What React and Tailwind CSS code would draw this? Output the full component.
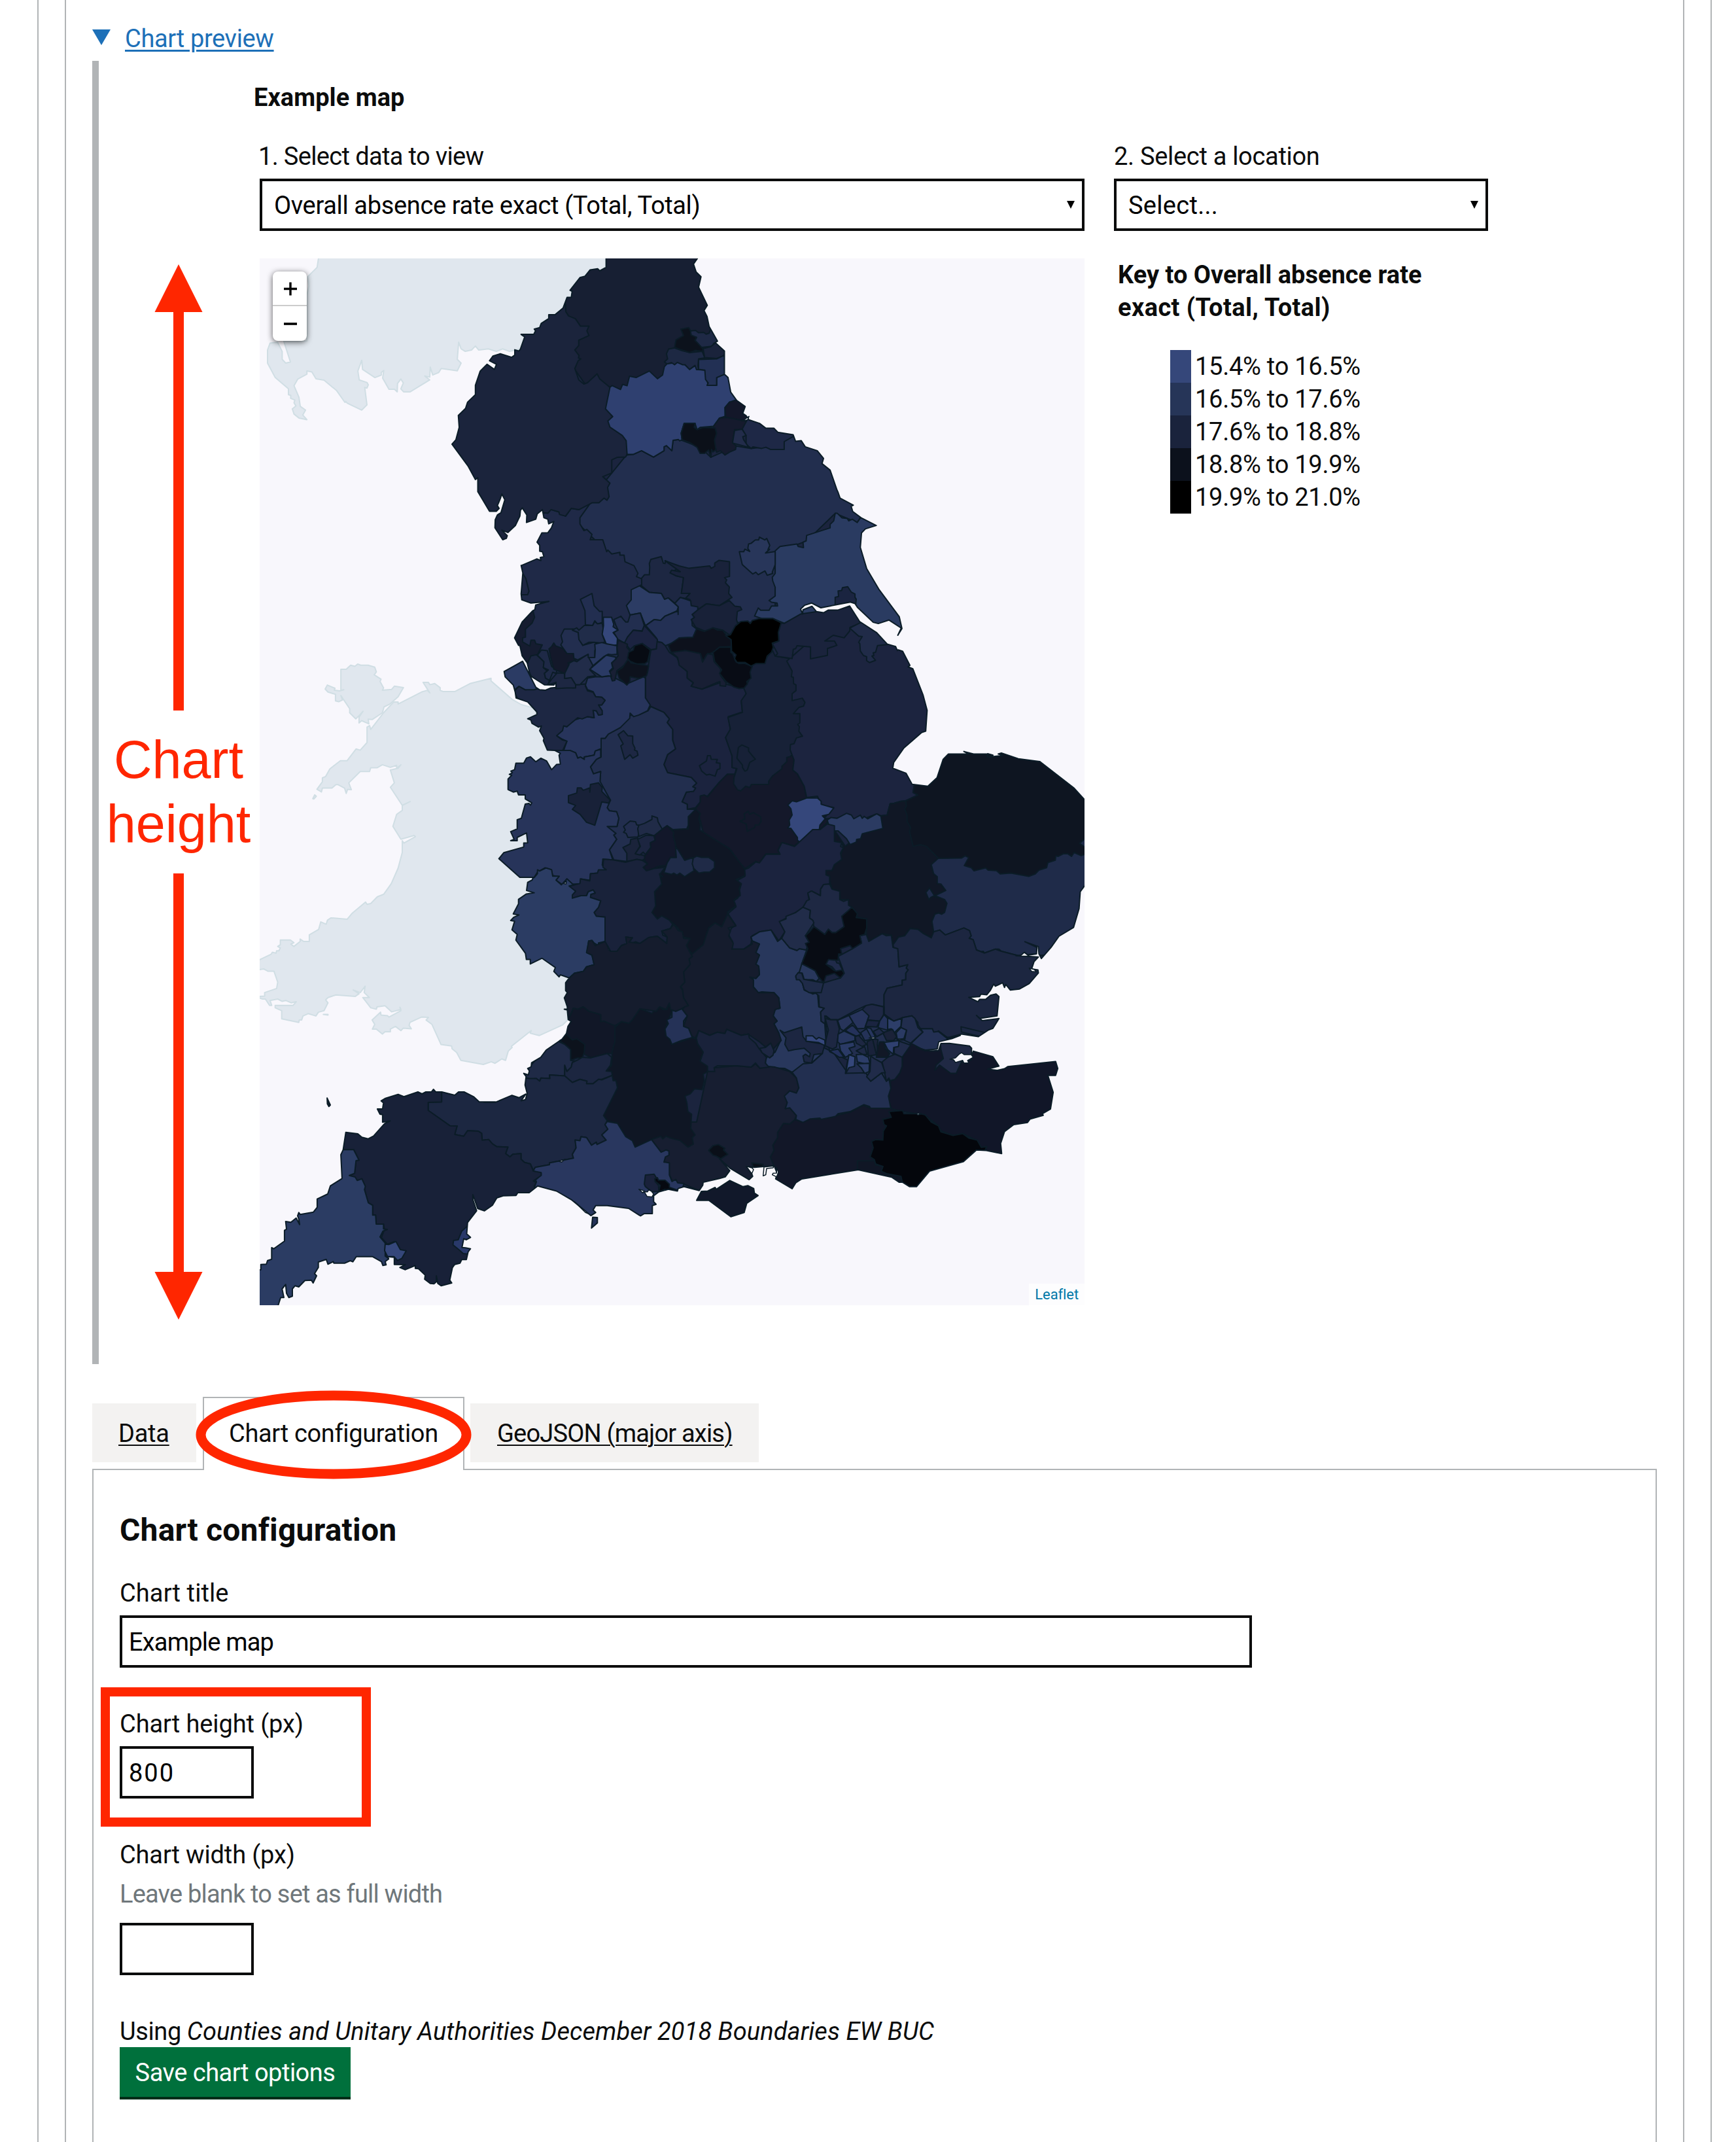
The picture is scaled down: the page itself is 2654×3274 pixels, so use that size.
import React from 'react';

// Survey sheets: origin (x, y) and units per pixel on each axis.
const SHEETS = {
  A: [380, 380, 2.3758, 2.8],
  B: [680, 380, 2.1778, 2.8],
  C: [680, 840, 3, 2.8],
  D: [1100, 800, 2.7034, 2.6133],
  E: [380, 960, 2.8, 2.24],
  F: [740, 1280, 3, 2.529],
  G: [1100, 1280, 2.7034, 2.529],
  H: [380, 1600, 2.24, 3],
};

// "B: x,y x,y C: x,y" -> svg points in page pixels
function points(src) {
  let sheet = SHEETS.A;
  return src
    .trim()
    .split(/\s+/)
    .map((tok) => {
      if (tok.endsWith(':')) {
        sheet = SHEETS[tok[0]];
        return '';
      }
      const [x, y] = tok.split(',').map(Number);
      const [ox, oy, sx, sy] = sheet;
      return `${(ox + x / sx).toFixed(1)},${(oy + y / sy).toFixed(1)}`;
    })
    .filter(Boolean)
    .join(' ');
}

const NEIGHBOURS = [
  // Scotland
  'A: 254,20 254,42 249,80 215,120 219,160 212,200 212,395 128,397 152,485 135,490 122,474 122,440 105,400 78,405 69,434 69,490 97,552 145,600 145,625 153,628 153,641 168,648 165,660 172,673 159,686 165,708 183,725 212,732 197,712 207,691 188,675 183,636 165,587 179,558 212,537 212,524 230,528 245,557 274,563 320,608 350,658 353,654 359,662 411,691 430,669 422,594 430,597 435,583 430,573 402,562 397,524 411,478 414,517 459,552 482,541 482,530 491,522 487,554 510,602 530,602 540,613 541,577 553,558 562,575 553,600 563,613 587,613 658,562 640,545 658,550 660,507 669,541 691,530 700,513 758,523 772,490 758,474 763,400 772,429 787,440 810,434 824,417 836,434 871,429 900,440 923,429 948,440 1000,425 1150,300 1320,90 1320,20',
  // Wales
  'E: 1168,262 1130,245 1038,181 1038,172 948,190 884,217 832,217 820,213 820,204 797,190 776,194 770,186 747,186 776,222 765,213 740,219 640,260 640,253 622,253 578,290 523,347 518,334 507,339 507,392 478,418 460,414 422,454 393,454 374,466 348,482 330,508 316,513 316,526 293,552 312,561 316,548 357,548 374,536 383,536 411,548 418,566 424,552 440,553 429,530 478,491 518,491 523,478 551,478 573,468 607,477 634,470 634,480 652,468 640,480 607,486 624,530 607,545 658,607 692,594 658,607 658,624 634,638 618,679 652,723 709,710 714,714 665,736 658,728 658,768 640,822 611,875 579,911 551,920 523,943 507,946 501,938 444,976 422,997 353,992 338,1000 332,1014 309,1006 300,1032 260,1050 260,1073 236,1073 221,1065 221,1073 194,1090 181,1082 194,1077 179,1068 136,1068 136,1084 125,1090 136,1095 130,1105 120,1105 118,1113 102,1110 96,1117 30,1142 30,1172 65,1167 84,1175 109,1175 125,1212 120,1234 69,1248 69,1260 30,1262 60,1270 72,1270 90,1292 99,1292 92,1275 125,1270 144,1278 159,1275 183,1283 204,1279 190,1292 114,1292 114,1300 142,1310 142,1338 215,1350 217,1342 227,1342 233,1328 255,1320 288,1328 299,1315 323,1310 340,1283 330,1273 340,1265 374,1256 457,1261 473,1252 448,1239 478,1248 499,1226 495,1248 517,1265 489,1265 523,1300 547,1305 550,1297 584,1293 612,1314 652,1306 648,1298 652,1310 601,1332 595,1327 567,1325 565,1315 545,1330 529,1342 540,1357 530,1373 547,1373 573,1390 584,1382 607,1382 607,1373 629,1364 652,1378 662,1370 697,1372 687,1360 691,1350 740,1332 770,1333 760,1342 785,1357 824,1426 869,1431 871,1440 891,1453 909,1480 1005,1494 1039,1485 1055,1490 1084,1475 1100,1480 1112,1448 1128,1436 1125,1432 1210,1378 1206,1387 1244,1395 1344,1359 1368,1340 1400,1200 1340,500 1340,380 1250,280',
  // Anglesey, Holy Island, Bardsey, Caldey
  'E: 395,141 418,141 437,127 455,131 467,123 480,127 512,127 540,134 547,150 538,160 567,175 563,183 578,205 573,213 612,210 624,199 663,204 640,235 605,260 580,270 573,290 530,313 512,312 515,328 484,317 473,325 473,305 490,285 473,300 459,311 433,290 433,276 395,231 402,246 386,252 372,249 372,227 340,219 328,209 337,195 370,206 367,213 390,215 408,211 395,213',
  'E: 275,584 283,571 290,576 280,585',
  'E: 320,1323 340,1323 340,1325',
];

const ENGLAND =
  'B: 537,20 537,80 516,95 509,86 484,91 467,118 450,124 417,178 424,183 421,209 407,209 394,254 367,283 346,283 346,299 321,320 316,338 298,344 302,352 296,367 254,367 266,378 251,432 246,438 233,433 233,455 223,465 185,450 160,460 149,480 172,495 165,517 141,495 118,524 102,585 102,625 76,657 69,684 45,714 48,765 37,818 24,837 77,930 102,988 110,980 110,1040 149,1124 172,1124 181,1112 175,1100 185,1070 190,1050 200,1075 187,1130 175,1140 168,1160 167,1195 193,1246 205,1240 208,1228 190,1205 210,1215 235,1185 250,1145 252,1120 258,1110 273,1140 272,1172 303,1158 308,1135 325,1117 330,1152 343,1158 346,1178 363,1168 355,1195 343,1216 323,1217 307,1256 316,1270 316,1295 325,1297 330,1318 318,1322 320,1335 306,1328 255,1356 ' +
  'C: 350,68 358,100 350,190 353,215 395,229 478,222 417,237 413,257 403,262 355,310 320,378 338,410 344,410 355,455 378,485 392,540 458,579 500,580 510,568 510,590 487,592 462,602 435,600 418,590 357,478 272,522 277,545 314,580 323,610 327,635 380,652 422,695 422,706 380,724 395,730 400,744 430,760 443,755 435,775 455,808 452,818 470,858 505,860 530,872 524,880 530,918 512,920 490,942 467,905 441,893 417,908 393,887 375,892 362,914 326,914 320,942 303,948 310,955 296,962 307,966 290,982 290,1027 314,1038 332,1034 338,1050 369,1050 369,1067 399,1084 393,1094 386,1086 369,1089 351,1150 332,1156 332,1195 302,1207 318,1240 302,1246 332,1246 332,1232 375,1213 380,1255 362,1256 362,1273 271,1297 248,1323 344,1403 405,1403 401,1414 380,1424 375,1459 410,1469 374,1474 338,1497 338,1516 314,1559 ' +
  'F: 134,296 160,300 137,308 122,321 140,324 128,357 152,375 146,397 190,448 194,472 212,472 212,489 266,467 327,503 320,518 344,539 350,531 391,543 374,562 374,592 382,600 368,620 382,655 382,664 368,664 382,667 386,704 400,711 385,730 378,758 358,780 345,787 285,822 260,850 218,871 216,887 200,893 208,902 203,918 182,912 193,924 188,957 198,990 190,1013 170,1018 192,992 160,1006 128,997 52,1024 0,1024 ' +
  'H: 845,253 790,253 772,230 738,207 719,207 706,222 662,207 641,207 633,195 626,207 607,207 594,216 580,207 532,229 512,218 469,236 454,248 462,257 459,285 441,285 450,309 459,311 459,346 485,340 466,352 428,409 410,422 388,415 374,399 333,392 324,472 316,495 320,604 280,638 271,675 235,698 235,736 222,758 177,769 172,760 168,775 172,790 175,815 163,785 145,805 127,801 130,836 123,842 123,891 86,926 79,921 79,974 65,980 61,997 42,998 42,1022 20,1026 20,1195 101,1187 110,1150 121,1150 115,1110 127,1090 130,1130 138,1150 150,1144 150,1110 159,1096 172,1101 193,1072 215,1070 221,1083 233,1050 226,1040 239,1012 239,987 266,975 272,997 290,985 292,992 330,992 348,981 357,986 369,962 424,962 455,985 460,1003 471,1000 468,985 480,973 476,962 499,965 499,998 537,999 518,1012 537,1022 571,1003 571,1016 582,1018 605,1047 603,1066 622,1085 635,1087 643,1078 643,1050 648,1085 660,1096 696,1083 689,1070 698,1013 706,998 724,992 730,976 746,976 752,940 760,926 743,922 731,920 737,880 746,885 760,874 747,858 750,806 781,752 768,700 768,678 785,742 808,752 835,727 850,693 872,683 916,682 922,669 961,669 990,638 ' +
  'F: 332,1367 400,1400 490,1462 512,1450 500,1440 512,1423 565,1423 663,1434 712,1460 718,1463 735,1454 772,1454 772,1423 789,1418 778,1408 778,1385 802,1370 845,1360 887,1367 890,1357 917,1350 987,1365 1003,1345 1005,1333 1080,1318 1106,1312 1127,1288 1080,1242 1127,1278 1216,1323 1232,1310 1228,1300 1203,1272 1240,1275 1285,1272 1330,1268 1345,1300 ' +
  'G: 232,1320 300,1358 315,1335 340,1320 573,1285 711,1313 743,1333 757,1333 786,1350 814,1350 868,1290 1008,1253 1062,1208 1103,1210 1166,1222 1162,1183 1178,1137 1216,1110 1273,1102 1283,1089 1338,1074 1334,1068 1368,1050 1379,985 1357,920 1389,920 1398,893 1389,866 1191,886 1178,894 1148,900 1108,896 1155,884 1130,848 1049,826 1040,845 1042,815 1033,806 950,796 915,797 905,824 870,826 835,820 815,812 850,822 900,818 906,790 960,778 995,765 940,775 1000,760 1070,770 1110,745 1130,738 1155,700 1086,708 1062,688 1075,700 1147,690 1155,615 1143,605 1120,610 1100,626 1075,626 1068,635 1030,618 1075,615 1080,606 1105,608 1120,590 1133,567 1140,575 1170,562 1178,580 1183,568 1202,590 1240,586 1280,565 1318,524 1316,512 1290,508 1300,480 1318,462 1225,457 1245,456 1260,444 1275,455 1310,450 1312,425 1262,403 1318,422 1320,450 1330,468 1370,425 1403,382 1463,348 1486,275 1491,210 1509,187 1540,160 ' +
  'D: 1540,1130 1509,1104 1466,1058 1323,951 1235,940 1165,917 1152,921 1170,927 1115,933 1130,926 1108,920 1108,933 1105,921 1050,921 1010,911 1030,921 946,921 924,943 899,1016 861,1050 796,1042 771,998 716,978 720,955 762,897 836,835 852,830 858,747 841,685 799,581 779,573 787,567 757,511 738,505 735,508 728,492 693,482 650,437 579,392 538,330 490,346 450,346 430,357 400,352 382,331 345,345 343,362 335,342 352,327 380,318 419,337 541,314 560,320 570,335 635,395 656,400 700,386 751,418 737,447 754,420 743,373 660,265 608,180 582,96 587,38 603,22 648,8 ' +
  'B: 1435,1184 1386,1152 1358,1125 1353,1103 1360,1098 1316,1068 1310,1045 1305,1030 1283,948 1256,920 1261,898 1240,865 1200,848 1187,822 1168,825 1160,797 1109,786 1096,769 1069,769 1048,748 1013,733 1003,715 992,705 1000,676 972,650 952,614 943,552 931,538 931,438 900,402 908,396 880,333 873,290 863,265 874,243 845,165 853,120 837,100 828,66 841,42 837,20';

const ISLES = [
  ['#11182a', 'F: 975,1403 997,1368 1026,1367 1060,1353 1065,1360 1127,1326 1188,1350 1210,1346 1237,1357 1240,1375 1257,1384 1205,1414 1193,1450 1132,1466 1031,1403'],
  ['#10202b', 'H: 269,235 280,267 275,274 270,262'],
  ['#26345a', 'F: 498,1468 520,1469 520,1490 493,1510'],
];

// [fill, outline], painted in order and clipped to the coast
const AREAS = [
  ['#171f33', 'B: 360,0 950,0 950,640 500,640 380,420'],
  ['#222e4e', 'B: 605,883 627,881 655,865 695,892 730,865 730,848 738,843 756,865 760,820 782,817 850,850 886,893 970,845 1020,855 1055,850 1130,826 1160,770 1500,900 1480,1190 1384,1152 1373,1172 1300,1133 1204,1252 1100,1300 1100,1600 850,1600 640,1420 430,1160'],
  ['#1f2947', 'B: 200,1110 330,1133 354,1117 380,1127 402,1145 421,1112 447,1117 490,1080 450,1152 450,1178 463,1207 473,1202 490,1223 484,1246 526,1246 539,1297 543,1290 556,1307 583,1300 583,1312 597,1312 600,1340 630,1357 643,1390 638,1404 655,1413 C: 903,150 895,155 860,300 820,600 300,640 200,400 250,0'],
  ['#1b243c', 'B: 0,220 394,220 402,240 403,270 412,288 435,300 452,332 480,332 473,352 480,372 446,392 446,415 433,434 447,458 445,468 453,472 444,480 433,513 446,562 463,580 475,574 507,536 516,558 550,594 640,760 607,881 602,892 575,893 556,904 556,960 526,976 550,1004 542,1022 547,1062 540,1077 530,1068 513,1088 490,1088 447,1117 421,1112 402,1145 382,1138 380,1127 354,1117 343,1133 325,1130 240,1260 0,1260'],
  ['#2f4070', 'B: 550,594 557,586 585,603 592,581 607,587 615,546 637,552 681,524 708,557 725,541 731,505 740,493 774,487 800,497 815,517 833,500 845,518 866,520 870,545 877,585 905,585 905,552 931,538 960,540 1010,660 948,657 933,680 933,718 915,725 895,760 850,765 840,775 833,748 797,748 787,790 790,818 782,823 778,817 760,820 756,865 738,843 730,848 730,865 695,892 655,865 627,881 607,881 604,822 591,800 550,764 543,738 559,719 535,686'],
  ['#1d2843', 'B: 745,430 765,425 790,437 815,445 857,440 866,468 845,472 843,500 845,518 838,518 833,500 815,517 800,497 792,497 774,487 765,497 755,488 740,493 731,485 742,472 738,450'],
  ['#1e2945', 'B: 818,352 835,350 845,360 862,358 870,366 880,362 885,345 900,340 915,396 896,405 890,418 855,423 833,395 838,380 820,372'],
  ['#1a233b', 'B: 860,428 885,420 903,402 945,438 926,460 905,470 865,466'],
  ['#0c121c', 'B: 786,345 812,338 818,352 820,370 838,380 833,392 860,430 858,440 835,435 815,445 797,437 780,430 765,422 770,390 795,372'],
  ['#223054', 'B: 845,475 905,472 928,458 945,480 945,530 905,552 905,585 873,585 877,575 868,560 866,520 845,517'],
  ['#131729', 'B: 948,657 975,645 1010,675 992,705 1015,720 1000,742 960,738 935,720 933,680'],
  ['#151a2d', 'B: 895,760 915,725 940,722 1008,740 1000,775 965,775 958,830 970,845 968,860 950,870 933,883 918,865 905,872 895,830'],
  ['#0b1019', 'B: 797,748 833,748 830,765 840,775 860,765 900,768 905,790 898,820 903,860 893,870 888,860 886,893 878,862 865,876 850,876 840,850 815,830 790,818 787,790'],
  ['#1e2846', 'B: 990,773 1010,725 1160,785 1170,797 1130,826 1130,860 1085,860 1069,850 1055,855 1026,848 1020,855 1003,838 1003,800'],
  ['#222c4a', 'B: 965,778 990,773 1003,800 992,805 995,818 1012,850 958,832'],

  ['#1e2743', 'C: 340,102 358,102 372,125 386,178 380,193 340,193'],
  ['#1d2742', 'C: 903,122 916,108 938,108 940,75 938,60 945,42 993,30 1002,58 1010,60 1012,48 1080,78 1040,95 1060,112 1095,120 1085,188 1125,188 1105,210 1080,205 1055,230 1025,207 1008,213 993,188 938,183 903,155'],
  ['#19223a', 'C: 1010,48 1075,70 1120,80 1195,72 1215,70 1222,80 1238,72 1238,58 1258,46 1306,52 1306,115 1283,120 1293,130 1287,142 1305,160 1302,188 1317,205 1260,240 1200,232 1165,255 1130,240 1125,215 1105,208 1125,188 1085,188 1095,120 1060,112 1033,100 1040,88 1080,95'],
  ['#2c3c64', 'C: 893,155 938,183 993,188 1008,213 1025,207 1071,245 1065,262 1010,285 990,303 960,300 920,326 897,272 850,280 833,240 855,215 855,172'],
  ['#233054', 'C: 1055,230 1080,205 1105,212 1128,220 1130,240 1160,245 1160,260 1135,278 1145,290 1133,300 1135,325 1155,340 1138,376 1075,378 1070,390 1010,412 995,398 978,395 970,378 922,325 960,300 990,303 1010,285 1070,262 1070,278 1071,245'],
  ['#182138', 'C: 1165,255 1200,232 1260,240 1305,218 1330,242 1355,245 1362,257 1342,265 1338,300 1345,320 1325,350 1305,365 1275,345 1230,335 1215,345 1195,350 1150,332 1130,300 1145,290 1135,278'],
  ['#0d111c', 'C: 1155,340 1190,350 1230,335 1250,345 1275,345 1290,365 1312,380 1315,415 1260,418 1230,440 1200,450 1185,480 1172,445 1100,432 1065,440 1040,444 1025,410 1075,378 1138,376'],

  ['#1b233e', 'C: 970,395 995,398 1010,410 1030,440 1065,462 1080,495 1112,522 1112,550 1140,570 1130,585 1180,597 1262,570 1350,590 1380,595 1382,620 1360,650 1365,695 1300,715 1310,770 1288,805 1318,880 1318,932 1338,935 1330,962 1295,962 1260,995 1205,1055 1172,1055 1172,1080 1150,1105 1112,1112 1112,1090 1088,1080 1108,1038 1140,1035 1150,1020 1137,1015 1155,1000 1130,975 1022,955 1005,920 1022,877 1058,853 1045,815 1045,770 1020,740 1030,725 1005,697 945,672 920,635 920,545 910,545 935,490 945,430 970,425'],
  ['#1b233e', 'C: 1168,925 1200,905 1205,882 1218,882 1222,897 1250,898 1245,912 1262,915 1262,938 1250,942 1240,970 1215,962 1200,965 1178,948'],
  ['#181f34', 'C: 1040,440 1105,432 1172,445 1182,482 1205,445 1230,450 1235,480 1265,510 1265,540 1290,570 1288,585 1262,582 1262,565 1245,570 1180,597 1130,585 1140,570 1112,550 1112,522 1075,495 1068,462'],
  ['#14182a', 'C: 1150,1110 1172,1080 1172,1055 1190,1050 1205,1058 1260,995 1295,962 1335,962 D: 280,930 308,925 308,945 303,985 322,1000 350,1050 360,1095 480,1135 440,1200 415,1225 385,1225 310,1288 258,1275 242,1305 252,1320 192,1320 165,1357 150,1350 100,1382 C: 1375,1365 1345,1330 1305,1280 1250,1250 1185,1210 1172,1160'],
  ['#14182a', 'D: 85,1190 105,1180 102,1160 118,1150 125,1162 140,1155 170,1172 172,1190 162,1205 148,1205 145,1215 115,1230 110,1200'],
  ['#172137', 'D: 130,550 188,545 218,505 230,530 290,540 360,540 360,900 308,920 290,932 278,935 278,952 258,970 258,980 220,1008 203,1030 203,1042 132,1043 125,1055 108,1050 88,1068 75,1065 58,1040 60,1015 72,980 52,975 52,930 25,855 45,822 35,775 95,755 90,708 110,680 100,658 120,630'],
  ['#172137', 'D: 78,895 92,885 120,897 120,910 148,942 125,955 115,985 105,990 95,975 95,965 72,938'],
  ['#1c243f', 'D: 290,540 278,550 300,590 297,612 305,615 306,640 316,645 316,668 300,680 300,708 342,698 353,715 347,730 328,735 305,760 332,760 332,797 323,803 330,812 328,830 343,850 318,857 308,880 293,883 292,905 308,945 303,985 322,1000 350,1050 360,1095 405,1090 420,1125 472,1135 430,1180 485,1178 570,1190 650,1160 667,1168 693,1165 705,1120 722,1118 750,1110 770,1108 820,1085 800,1075 805,1045 900,1040 900,500 700,440 540,330'],
  ['#080c15', 'C: 1230,440 1260,418 1312,418 1312,440 1320,445 1335,480 1350,488 1375,487 1410,500 1400,525 1405,550 1385,565 1388,575 1372,593 1350,595 1325,588 1290,565 1260,530 1270,515 1238,480'],
  ['#1a233c', 'D: 250,397 268,399 335,362 345,335 382,320 430,330 540,320 590,395 540,415 538,430 515,457 470,447 435,470 475,470 485,487 446,500 446,527 376,541 376,493 320,489 315,500 305,503 300,540 230,530 240,520 218,480 245,470 243,430'],
  ['#202b48', 'D: 538,418 579,398 600,390 710,482 653,488 645,515 635,517 638,528 630,530 645,547 620,556 608,548 608,532 595,528 582,510 580,480 575,475 590,452 575,450'],
  ['#2a3b61', 'D: 230,110 250,92 320,82 325,92 347,97 345,75 358,70 360,48 457,18 B: 1283,1195 1283,1180 1295,1165 1300,1133 1307,1133 1322,1152 1340,1155 1345,1165 1357,1158 1373,1172 1384,1152 1480,1184 D: 800,30 800,460 640,420 560,330 335,362 268,399 220,380 175,380 145,370 160,338 170,347 205,347 215,330 240,330 238,318 215,315 205,308 230,290 230,255 220,230 218,215 230,200'],
  ['#28365a', 'D: 82,113 100,113 105,103 125,112 117,100 120,82 130,80 148,66 162,66 165,55 188,66 195,60 208,88 200,105 207,103 190,118 230,112 230,165 218,195 220,200 197,207 188,190 160,205 150,195 137,202 94,165'],
  ['#1a2440', 'D: 478,335 478,295 492,292 490,270 505,268 508,257 530,253 545,275 560,282 560,295 565,303 562,330'],
  ['#000000', 'D: 25,448 45,445 65,410 88,392 117,390 127,400 135,388 165,380 220,380 255,397 243,435 245,470 218,478 222,495 215,515 197,530 188,560 150,560 130,570 105,555 72,555 62,540 68,525 50,510 48,465'],
  ['#35477b', 'D: 282,1125 300,1108 318,1112 360,1097 405,1097 420,1110 420,1122 472,1137 452,1162 425,1168 437,1180 415,1205 412,1225 385,1225 333,1275 322,1265 322,1255 295,1218 282,1218 290,1205 288,1185 300,1165 295,1140'],

  ['#101725', 'D: 475,1225 520,1290 590,1230 675,1218 667,1168 693,1165 705,1120 722,1118 750,1110 770,1108 830,1250 905,1338 875,1368 885,1400 903,1412 900,1438 915,1440 935,1468 890,1490 930,1500 940,1520 G: 935,285 918,297 905,292 890,297 878,325 885,365 875,388 840,370 820,355 788,352 765,380 740,385 717,415 710,378 672,372 617,402 607,380 608,315 570,310 548,270 533,262 533,240 497,240 497,208 465,200 455,165 455,150 440,145 440,128 465,127 475,105 505,85 500,70 512,40 505,20 475,15 475,-20'],
  ['#2b3b62', 'D: 445,1185 460,1175 485,1178 525,1158 545,1165 555,1180 582,1165 590,1178 598,1170 612,1180 650,1160 667,1170 675,1218 590,1240 583,1260 567,1262 565,1273 540,1283 525,1260 490,1228 440,1228 450,1200'],
  ['#1f2b49', 'G: 875,105 905,80 1000,78 1020,40 1540,0 1540,380 1335,490 1300,450 1235,457 1165,440 1155,432 1140,432 1095,447 1090,440 1082,442 1062,435 1048,395 1032,390 1040,380 1033,360 1010,350 933,377 910,358 885,365 878,325 890,297 905,292 918,297 930,290 940,255 930,240 890,225 935,205 915,180 900,178 900,152 885,140'],
  ['#1f2b49', 'G: 853,213 868,195 888,225 873,232 865,240'],
  ['#0e1521', 'D: 796,1030 805,1045 800,1075 820,1085 770,1108 772,1130 765,1140 775,1165 775,1190 790,1215 785,1230 800,1290 830,1283 855,1290 905,1338 1000,1337 1015,1328 1030,1335 1012,1367 1040,1375 1052,1388 1100,1376 1110,1385 1145,1387 1160,1400 1205,1397 1278,1410 1305,1400 1320,1385 1352,1375 1357,1355 1388,1345 1390,1328 1400,1330 1420,1320 1440,1320 1455,1330 1465,1315 1495,1327 1540,1310 1540,880 900,890 850,1040'],
  ['#1f2b49', 'D: 1488,1278 1512,1258 1520,1300'],

  ['#1b233e', 'G: 100,125 120,118 150,95 165,98 192,65 250,65 242,50 258,20 310,35 385,-30 415,-30 445,-52 475,-45 475,15 505,20 500,35 512,40 500,60 505,85 475,105 465,127 440,128 440,145 455,150 455,180 430,182 418,200 417,225 380,207 365,215 370,240 345,270 300,300 250,325 260,345 270,365 245,400 213,358 165,365 135,380 130,412 100,432 52,432 55,405 37,375 50,350 67,340 35,295 68,268 58,245 75,235 85,215 82,205 90,180 70,168 105,150'],
  ['#1e2843', 'G: 365,215 380,207 417,225 418,200 430,182 455,180 465,200 497,208 497,240 512,247 533,240 533,262 548,270 510,305 515,345 480,368 465,368 450,355 435,375 390,345 385,320 372,312 375,282 345,270 360,245 372,240'],
  ['#28375c', 'G: 130,385 165,365 213,358 240,402 257,390 290,427 320,437 330,430 360,435 340,488 370,500 395,515 410,540 400,557 365,550 345,550 360,575 385,605 405,600 410,655 433,660 418,675 420,710 435,720 440,790 425,835 380,872 350,875 300,908 270,893 190,890 190,860 195,850 230,830 250,790 245,760 225,720 238,710 222,690 230,665 250,660 245,620 225,600 175,597 160,600 140,578 140,550 125,540 150,545 165,530 162,498 150,490 165,455 150,445 165,412 135,400'],
  ['#1f2b48', 'G: 550,430 587,408 580,380 607,375 617,402 672,372 690,380 710,378 717,425 737,430 742,500 778,492 772,505 780,512 770,525 770,550 755,552 755,570 693,583 680,608 680,655 630,645 600,655 590,665 560,670 558,685 540,685 490,705 460,705 440,690 435,720 420,710 418,675 433,660 412,655 410,612 395,600 385,605 350,590 343,565 400,557 430,562 500,543 515,525 490,460'],
  ['#1c2640', 'G: 717,415 740,385 765,380 788,352 820,355 840,370 875,388 885,365 910,358 933,377 1010,350 1033,360 1040,380 1032,390 1048,395 1062,435 1082,442 1095,447 1140,432 1165,440 1235,457 1340,455 1350,560 1180,780 1000,780 940,772 905,748 885,760 880,740 820,740 820,715 795,690 755,697 720,710 680,683 680,608 693,583 755,570 755,552 770,550 770,525 780,512 772,505 778,492 742,500 737,430 720,425'],
  ['#212c49', 'G: 247,325 275,315 275,305 315,290 345,270 375,282 372,312 385,320 390,330 355,380 370,405 358,435 330,430 320,437 290,427 257,390 270,365'],
  ['#28375c', 'G: 315,540 325,523 342,525 350,550 385,550 400,557 412,545 395,515 370,500 340,488 330,520'],
  ['#1f2b48', 'G: 343,565 330,550 318,550 315,535 325,523 340,525 348,548 370,552 398,557 430,562 420,600 370,600 350,588'],
  ['#080c14', 'G: 390,345 435,375 450,355 465,368 480,368 515,345 505,305 548,270 570,295 565,310 608,315 608,350 600,375 580,380 587,408 550,430 540,418 500,430 505,450 492,450 490,475 465,475 440,490 475,515 500,505 515,525 500,543 475,525 440,535 430,562 410,540 395,515 340,488 365,430 355,410 370,405 355,380 372,365'],
  ['#202b4a', 'G: 440,490 450,472 480,475 485,485 495,487 508,512 480,517 465,500'],
  ['#233053', 'G: 820,740 880,740 885,752 905,750 945,780 920,790 905,828 870,828 815,812 788,800 815,775 840,752'],
  ['#1c2742', 'G: 998,732 1100,755 1080,770 1000,752'],

  ['#111628', 'G: 757,850 755,840 790,795 850,825 1040,800 1200,860 1440,840 1440,950 1380,1120 1190,1240 1085,1205 1060,1170 1005,1145 965,1152 915,1135 905,1115 850,1075 760,1060 710,1050 700,1015 698,990 708,970 705,940 725,935 745,910 755,885'],
  ['#121728', 'G: 265,1105 290,1108 310,1090 345,1100 375,1088 415,1088 480,1075 540,1062 595,1035 620,1045 705,1048 760,1060 690,1115 720,1340 570,1340 330,1380 220,1340 210,1235 225,1210 220,1190 240,1160 240,1140'],
  ['#04060c', 'G: 700,1060 757,1055 762,1068 830,1068 850,1072 875,1100 905,1115 915,1138 965,1152 1005,1145 1030,1162 1065,1170 1082,1198 1105,1195 1070,1260 814,1380 730,1345 690,1300 665,1295 675,1272 645,1262 640,1245 622,1235 635,1200 628,1175 645,1168 675,1170 677,1135 690,1115 680,1110 675,1090 710,1082'],
  ['#101625', 'G: 570,1250 640,1250 645,1265 675,1272 668,1290 690,1300 750,1310 757,1340 570,1300'],
  ['#171e31', 'F: 975,1100 1025,905 1060,890 1160,883 1225,888 1245,875 1265,892 1305,885 G: 230,888 290,905 318,930 328,968 318,988 290,980 270,1000 280,1025 272,1048 290,1045 318,1075 310,1092 290,1108 265,1105 240,1140 240,1160 220,1190 225,1210 210,1235 225,1270 230,1330 100,1340 F: 1000,1370 917,1340 887,1338 880,1325 865,1330 850,1305 850,1258 825,1255 832,1235 848,1225 845,1212 812,1217 768,1168 800,1100'],
  ['#222f50', 'G: 300,908 345,875 382,872 425,835 425,810 470,830 525,905 530,900 560,880 605,910 625,942 670,910 690,942 700,930 708,970 698,1000 708,1047 625,1047 620,1040 597,1033 540,1060 490,1068 480,1078 420,1090 415,1085 375,1088 345,1102 315,1090 318,1075 290,1045 272,1048 280,1025 268,1000 290,980 318,988 328,968 318,930'],
  ['#151c2d', 'F: 1117,295 1155,342 1120,350 1130,362 1122,380 1143,410 1137,432 1190,432 1230,412 G: 130,385 135,400 165,412 150,445 165,455 150,490 162,498 165,530 150,545 125,540 140,550 140,578 160,600 225,600 245,620 250,660 230,665 222,690 238,710 225,720 245,755 255,785 220,820 210,797 190,810 165,790 125,765 F: 1213,760 1180,765 1113,742 1105,758 1070,753 1035,765 985,747 970,775 955,770 938,738 915,730 932,690 910,665 925,650 937,650 915,620 910,585 900,578 920,560 915,520 945,490 940,470 955,460 930,430 1005,410 1030,350 1060,330 1090,345'],
  ['#19223a', 'F: 970,785 985,747 1035,765 1070,753 1105,758 1113,742 1180,765 1213,760 1217,775 1245,795 1260,815 1295,850 1290,872 1307,888 1265,892 1245,872 1225,888 1160,883 1070,883 1055,890 1058,905 1025,905 1020,885 990,868 1005,830'],
  ['#1d2742', 'F: 1265,815 1290,812 1315,795 1330,825 1325,842 1310,852 1275,832'],
  ['#0f1624', 'C: 1117,1143 1150,1110 1172,1130 1165,1150 1172,1180 1170,1200 1220,1230 1305,1280 1345,1330 1375,1365 1378,1395 1335,1412 1360,1430 1350,1450 1355,1480 1325,1500 1335,1525 1297,1550 F: 1117,295 1090,345 1060,330 1030,350 1005,415 955,450 930,425 930,400 945,390 915,385 890,350 865,330 850,320 830,310 800,318 770,290 787,265 782,210 815,180 805,145 C: 1000,1400 920,1370 1040,1200 1117,1195'],
  ['#0f1624', 'F: 600,735 630,712 665,718 680,705 715,662 770,680 785,665 790,672 805,655 820,665 840,665 850,640 865,665 835,730 860,800 955,775 975,780 980,800 1005,830 990,865 1025,885 1025,905 1005,915 1010,940 1000,975 965,972 945,992 922,1000 930,1025 935,1060 952,1070 948,1125 968,1150 955,1160 960,1185 935,1197 900,1172 855,1162 835,1155 820,1165 810,1155 768,1168 693,1197 680,1180 650,1157 612,1105 565,1095 548,1075 612,968 605,940 590,935 585,905 560,905 585,880 590,790'],
  ['#253257', 'F: 862,668 880,672 907,662 932,690 915,710 915,730 938,738 955,773 905,785 862,800 852,780 835,768 830,740 845,720 838,705 862,695'],

  ['#222e4e', 'C: 945,672 1005,697 1030,725 1020,740 1045,770 1045,815 1058,853 1022,877 1005,920 1022,955 1130,975 1155,1000 1137,1015 1150,1022 1140,1035 1108,1038 1088,1080 1112,1090 1112,1112 1150,1112 1117,1143 1117,1180 1110,1195 1045,1198 1020,1182 1000,1196 890,1250 890,1330 835,1335 775,1328 755,1285 788,1240 745,1185 790,1185 798,1150 788,1122 755,1118 745,1105 750,1085 760,1073 720,1020 700,1000 712,990 715,950 682,960 668,930 695,898 717,888 717,808 735,808 750,788 805,762 848,710 895,705 932,690'],
  ['#1d2743', 'C: 795,792 820,775 840,797 862,798 862,830 872,850 870,858 882,863 886,880 862,893 850,878 825,898 807,840 818,832'],
  ['#27345b', 'C: 645,580 655,550 690,545 722,545 760,540 835,575 910,545 920,550 920,635 942,665 930,690 890,708 866,715 850,700 848,722 805,762 750,790 735,808 717,808 717,852 690,862 685,880 640,888 640,898 622,888 610,893 600,870 575,860 545,860 560,820 540,812 513,797 545,755 560,758 585,732 630,720 655,715 685,720 680,688 695,690 705,708 722,706 705,665 720,665 735,645 720,632 692,630 680,608 655,600'],
  ['#1d2743', 'C: 315,600 325,600 340,585 370,600 410,596 425,580 520,580 590,592 600,578 645,575 645,585 655,605 680,610 692,630 720,632 735,645 720,665 705,665 722,690 722,706 705,708 695,690 680,688 685,720 655,715 630,725 610,720 560,758 545,755 540,775 513,797 540,815 560,820 535,872 470,870 400,760 340,650'],
  ['#27345a', 'C: 525,860 545,860 575,860 600,870 610,893 622,888 640,898 640,888 685,880 690,862 715,855 715,888 695,898 668,930 682,960 715,950 712,992 760,1073 745,1105 755,1118 788,1122 798,1150 790,1185 745,1185 785,1215 775,1222 788,1240 755,1285 770,1328 725,1325 722,1350 740,1370 700,1385 668,1387 665,1415 625,1410 620,1430 585,1432 560,1410 545,1438 510,1415 522,1400 495,1395 488,1370 460,1362 425,1380 410,1403 200,1420 220,860'],
  ['#182138', 'C: 567,1053 605,1042 608,1020 625,1020 635,1030 665,1020 665,1038 668,1005 705,998 722,1018 720,1035 758,1072 752,1085 720,1080 688,1180 650,1167 620,1133 585,1112 600,1095 567,1083'],
  ['#222d4d', 'C: 820,1185 850,1162 875,1165 880,1178 892,1180 885,1195 893,1215 885,1230 840,1232 832,1215 820,1210 828,1200'],
  ['#202b47', 'C: 890,1180 915,1172 950,1155 950,1140 975,1148 978,1165 998,1198 960,1225 925,1215 890,1228 885,1195'],
  ['#1a233a', 'C: 817,1275 850,1260 853,1240 885,1235 895,1270 875,1300 915,1310 920,1322 905,1330 880,1326 835,1335 835,1300'],
  ['#1c2540', 'C: 885,1240 925,1222 960,1225 965,1245 943,1255 945,1275 920,1305 910,1295 895,1307 873,1302 897,1270'],
  ['#12172a', 'C: 998,1196 1020,1182 1050,1210 1048,1225 1060,1270 1060,1318 1035,1318 1015,1352 980,1355 960,1365 925,1375 908,1355 930,1345 915,1330 918,1310 945,1275 943,1255 965,1245 960,1225'],
  ['#1f2b48', 'C: 1058,1272 1070,1285 1100,1330 1138,1318 1142,1375 1125,1385 1100,1400 1078,1385 1065,1393 1050,1385 1040,1390 1005,1383 1020,1340 1035,1318 1062,1318'],
  ['#1f2a47', 'C: 1140,1320 1155,1312 1175,1317 1210,1317 1237,1335 1237,1362 1215,1380 1190,1380 1165,1385 1142,1365 1135,1345'],
  ['#19223a', 'C: 725,1325 770,1328 830,1338 880,1326 905,1330 930,1345 910,1360 925,1375 960,1365 1010,1360 985,1392 1000,1400 F: 805,140 815,180 782,210 787,265 770,290 795,315 815,303 850,320 865,335 855,352 815,362 820,378 840,385 838,410 795,382 755,387 715,410 695,403 670,412 665,405 680,388 650,385 655,410 630,418 610,440 580,440 555,405 555,308 515,305 505,290 525,270 535,245 488,232 490,220 510,215 500,203 478,210 470,225 445,225 405,235 405,222 420,208 385,190 440,178 442,160 485,168 488,140 520,138 525,125 560,125 545,115 548,85'],
  ['#2b3c63', 'F: 150,155 230,155 245,140 245,125 255,130 285,118 310,125 315,150 345,150 330,165 355,183 380,160 410,183 390,188 420,208 405,222 405,235 445,225 470,225 478,210 500,203 510,215 490,220 488,232 535,245 525,270 505,290 515,305 555,308 555,402 525,408 525,418 505,408 495,398 480,400 472,445 495,455 505,492 470,500 455,518 415,525 391,543 330,580 100,500'],
  ['#151c2d', 'F: 300,560 391,543 415,525 455,518 470,500 505,492 495,455 470,445 480,400 495,398 510,418 555,402 580,440 610,440 630,418 655,410 650,385 680,388 665,405 715,410 755,387 795,382 838,410 840,385 815,362 855,352 870,335 890,360 910,365 915,390 945,392 928,418 955,460 940,470 945,490 915,520 920,560 900,578 910,590 915,620 937,650 920,655 905,662 880,672 855,665 850,640 835,665 805,655 790,672 715,662 680,705 665,718 630,712 600,728 535,715 535,685 480,672 455,655 430,665 410,660 390,700 350,704'],
  ['#111727', 'F: 370,700 395,690 410,660 430,665 455,655 480,672 535,685 535,712 550,710 600,728 600,790 585,835 565,835 490,852 460,838 400,790 345,785'],
  ['#0c121c', 'F: 340,782 378,760 405,783 425,778 462,800 460,830 450,855 430,852 397,862 397,820 370,800'],
  ['#1f2a46', 'F: 330,775 345,790 370,800 397,820 397,862 420,865 405,870 400,888 380,905 370,880 370,922 300,918 302,932 260,930 255,942 240,932 150,940'],
  ['#1c2640', 'F: 430,860 450,850 490,852 565,835 585,850 580,880 560,903 585,905 588,920 540,935 525,935 500,952 470,952 472,942 440,935 405,947 370,922 370,885 380,905 400,888 405,870'],
  ['#1c2741', 'F: 140,925 210,932 240,932 255,942 262,930 302,932 300,918 370,922 405,947 440,935 472,942 470,952 500,952 525,935 540,937 588,920 592,940 605,940 612,968 548,1075 565,1095 555,1110 568,1128 540,1150 560,1170 518,1187 515,1178 493,1190 470,1160 445,1157 440,1172 418,1170 422,1200 405,1225 410,1240 300,1258 300,1265 235,1275 H: 975,567 965,537 945,530 933,515 933,490 905,493 895,505 880,490 888,460 850,458 835,445 822,425 800,428 798,397 787,387 750,385 737,410 706,402 714,363 690,362 615,292 615,255 661,253 661,150 900,150'],
  ['#29375f', 'F: 225,1290 235,1275 300,1265 300,1258 410,1240 405,1225 422,1200 418,1170 440,1172 445,1157 470,1160 493,1190 515,1178 518,1187 560,1170 540,1150 568,1128 555,1110 565,1098 612,1105 650,1157 680,1172 693,1197 768,1168 812,1217 835,1208 848,1212 848,1228 832,1235 825,1255 850,1258 850,1305 862,1330 880,1322 888,1335 917,1338 900,1380 780,1520 450,1520 225,1370 240,1330 235,1325 262,1305 262,1297'],
  ['#182138', 'H: 290,150 661,150 661,253 615,255 615,292 690,362 714,363 706,402 737,410 750,385 787,387 798,397 800,428 822,425 835,445 850,458 888,460 880,490 895,505 905,493 933,490 933,515 945,530 965,537 975,570 1002,577 1002,590 975,615 985,622 978,640 1000,720 740,1120 560,1120 470,1000 500,893 475,905 455,875 465,840 462,813 437,813 435,772 425,770 425,727 410,715 397,655 398,635 388,605 378,615 348,590 363,580 368,522 378,520 360,472 290,472'],
  ['#2b3c63', 'H: 290,472 360,472 378,520 368,522 363,580 345,590 365,597 372,613 388,605 400,640 397,655 410,715 425,727 425,772 435,772 437,813 462,813 462,835 475,838 460,845 450,872 468,900 468,960 490,980 480,1030 440,1200 0,1200 0,600'],
  ['#35477a', 'H: 468,905 480,907 505,893 520,930 540,935 525,970 510,980 498,962 476,962 466,935'],
  ['#29396a', 'H: 747,825 765,830 770,875 740,885 775,930 750,950 735,948 720,930 700,908 702,888 718,885 730,845'],
  ['#19213a', 'F: 740,1305 780,1302 790,1315 785,1330 800,1345 802,1368 770,1370 740,1350 735,1340'],
  ['#060910', 'F: 783,1320 795,1315 800,1325 830,1325 850,1340 850,1352 892,1365 870,1375 830,1360 800,1372 808,1345 785,1330'],
  ['#0a0f18', 'F: 1030,1210 1050,1192 1075,1187 1105,1202 1098,1208 1118,1225 1085,1242 1065,1232 1050,1228'],
  ['#0a0f18', 'F: 1228,1258 1280,1264 1275,1300 1248,1316 1230,1300 1240,1285'],
  ['#121a2a', 'F: 1290,1282 1330,1290 1335,1315 1280,1312'],

  // Merseyside, Greater Manchester and Lancashire unitaries
  ['#151c30', 'C: 300,255 403,255 412,290 400,315 370,340 370,375 357,378 357,395 390,413 395,388 412,388 418,403 447,408 425,450 395,460 380,495 340,455 290,380'],
  ['#1c2640', 'C: 378,490 395,455 420,450 455,480 452,505 470,520 457,530 462,550 480,560 470,590 400,570 370,500'],
  ['#1e2946', 'C: 425,452 443,430 470,433 478,460 490,500 515,515 510,530 495,525 480,560 462,550 457,530 475,515 452,505 455,480'],
  ['#1d2742', 'C: 470,580 490,555 515,528 550,530 550,552 580,548 600,565 600,592 560,592 510,595 505,570'],
  ['#2b3b64', 'C: 357,470 425,595 410,600 370,600 340,585 320,600 240,530'],
  ['#212c49', 'C: 550,525 568,488 590,475 605,480 655,448 680,495 665,515 692,540 655,545 620,578 600,578 590,563 580,548 550,552'],
  ['#13182a', 'C: 478,425 490,415 500,400 508,412 545,425 560,445 590,445 592,465 610,470 565,485 570,492 550,530 500,512 485,460'],
  ['#222e4f', 'C: 533,368 548,340 590,340 600,350 612,352 618,385 633,410 690,395 700,415 688,432 688,462 658,462 658,448 610,472 592,465 590,445 560,445 532,408 540,395'],
  ['#222e50', 'C: 622,213 675,188 685,240 710,265 722,265 722,312 700,318 688,305 678,325 645,322 643,262'],
  ['#202c49', 'C: 585,345 605,335 615,345 640,325 678,325 688,308 700,318 722,315 727,340 722,362 735,395 720,400 685,397 660,397 633,410 615,385 612,355'],
  ['#35477b', 'C: 727,290 765,290 775,320 772,330 795,345 772,355 792,378 790,408 765,412 740,403 722,362 728,325'],
  ['#222e4f', 'C: 775,300 808,285 820,300 830,310 840,310 850,280 897,272 915,325 905,348 865,345 838,375 825,400 795,385 775,355 795,345 785,325'],
  ['#1b2340', 'C: 838,375 865,345 905,350 915,325 975,385 970,425 945,428 905,402 870,412 850,428 825,398'],
  ['#28375e', 'C: 688,405 720,398 740,403 790,412 790,448 765,450 750,448 730,458 680,497 660,462 688,462 690,430'],
  ['#181f34', 'C: 795,388 838,405 835,418 850,435 845,480 790,518 780,560 768,562 755,525 773,510 765,487 795,455 790,420'],
  ['#2a3a64', 'C: 665,512 740,452 782,460 785,468 765,485 770,507 755,520 765,542 750,540 720,545'],
  ['#070b13', 'C: 843,440 865,430 870,412 905,402 943,430 930,480 918,488 880,490 850,478 838,465'],
  ['#0d121d', 'C: 790,520 815,505 840,470 855,485 885,490 935,497 930,525 925,540 890,552 850,545 848,565 835,580 800,550'],

  // Berkshire and Greater London
  ['#1c2641', 'G: 250,745 268,755 340,733 345,770 360,788 435,800 425,835 390,840 380,872 350,868 345,845 355,838 372,848 375,835 350,815 310,820 285,825 270,800 275,775'],
  ['#222e4e', 'G: 435,690 460,705 490,705 560,670 600,652 680,655 680,683 720,710 795,690 840,752 790,795 755,850 745,910 690,942 670,910 625,942 605,910 520,912 530,860 455,828'],
  ['#35477b', 'G: 358,767 385,767 400,780 410,773 435,783 437,805 410,793 358,788'],
  ['#1d2742', 'G: 437,700 460,705 485,705 495,740 483,810 467,818 437,805 440,780 450,745'],
  ['#27345a', 'G: 488,707 535,688 552,715 512,747 500,740'],
  ['#27345c', 'G: 535,688 590,665 612,672 618,690 600,738 570,740 552,715'],
  ['#1e2845', 'G: 590,665 605,650 630,645 678,655 678,685 662,710 612,705 618,690'],
  ['#1a2440', 'G: 612,707 662,710 650,733 603,730'],
  ['#24325a', 'G: 662,710 680,685 695,700 695,745 655,735'],
  ['#2d3e69', 'G: 695,697 720,710 752,700 750,730 730,748 722,755 710,740 695,742'],
  ['#212d4d', 'G: 755,697 795,690 808,700 820,735 840,752 790,795 765,785 773,745 750,735'],
  ['#2a3a63', 'G: 730,755 750,735 773,745 762,778 735,782'],
  ['#1a2238', 'G: 675,755 715,742 732,770 720,785 690,785'],
  ['#24315a', 'G: 520,745 550,725 570,745 585,762 565,768 535,755'],
  ['#27365e', 'G: 490,760 515,748 560,768 560,785 500,800 488,790'],
  ['#243258', 'G: 583,755 610,738 625,755 630,780 600,785'],
  ['#27365e', 'G: 605,735 625,738 645,772 628,775'],
  ['#1e2947', 'G: 635,750 660,738 680,755 650,770'],
  ['#1d2742', 'G: 560,770 575,765 608,800 590,808 565,795'],
  ['#2a3a65', 'G: 495,800 555,790 560,808 535,815 550,835 520,850 500,825'],
  ['#22305a', 'G: 455,825 490,818 515,850 495,850'],
  ['#1e2946', 'G: 565,825 600,808 610,840 590,838'],
  ['#19223a', 'G: 610,790 635,778 650,840 615,845'],
  ['#1a2339', 'G: 632,778 655,782 652,800 655,840 648,838'],
  ['#111826', 'G: 655,810 662,790 680,790 685,815 703,835 695,850 648,850'],
  ['#2f4070', 'G: 680,792 742,785 742,808 720,812 718,838 695,820'],
  ['#202b49', 'G: 742,787 790,803 755,850 722,835 722,812 740,808'],
  ['#1d2641', 'G: 672,868 695,850 725,838 755,850 755,885 745,910 725,935 705,940 700,930 690,942 680,900'],
  ['#202b49', 'G: 625,845 640,855 670,870 685,910 670,910 625,942 608,925 622,905'],
  ['#2c3d68', 'G: 565,840 590,838 615,850 622,873 600,875 570,868'],
  ['#2a3a63', 'G: 568,875 620,873 618,905 600,912 585,890'],
  ['#35477a', 'G: 535,840 560,848 558,885 535,890 522,912'],
  ['#202944', 'G: 912,790 1040,800 1045,815 1040,860 1000,868 978,912 955,912 910,880 890,900 895,880 925,855 915,820'],
];

// Harbours and estuaries showing through the land
const WATER = [
  'G: 952,857 975,852 990,838 1000,832 1012,840 1040,840 1048,850 1025,862 1030,872 1010,872 1005,862 975,870 968,860',
  'F: 735,1370 750,1370 755,1362 768,1368 778,1378 770,1390 748,1388',
  'F: 710,1360 735,1366 728,1374',
  'F: 1203,1271 1230,1278 1236,1284 1228,1300',
  'F: 1284,1274 1328,1270 1326,1277 1296,1280 1292,1304 1280,1308',
  'F: 1341,1274 1350,1294 1342,1312 1322,1304 1326,1298 1342,1297',
  'B: 990,738 1013,718 1008,733',
  'G: 618,775 640,772 646,776 634,779',
  'G: 728,778 760,780 765,784 740,783',
  'G: 1280,505 1300,510 1310,520 1290,518',
  'G: 812,1066 835,1068 820,1073',
  'F: 342,1252 372,1244 356,1255',
  'F: 415,1408 480,1455 465,1450',
  'F: 568,420 578,438 570,434',
  'F: 365,178 378,168 376,180',
];

function ChoroplethMap() {
  return (
    <svg viewBox="397 395 1261 1600" className="block h-[1600px] w-[1261px] bg-[#f8f7fc]">
      <defs>
        <clipPath id="coast">
          <polygon points={points(ENGLAND)} />
        </clipPath>
      </defs>
      <g fill="#e0e7ee" stroke="#d0dee4" strokeWidth="2" strokeLinejoin="round">
        {NEIGHBOURS.map((p) => (
          <polygon key={p} points={points(p)} />
        ))}
      </g>
      <g clipPath="url(#coast)" stroke="#0b1c27" strokeWidth="2" strokeLinejoin="round">
        <polygon points={points(ENGLAND)} fill="#1b243e" />
        {AREAS.map(([fill, p]) => (
          <polygon key={p} points={points(p)} fill={fill} />
        ))}
      </g>
      <polygon points={points(ENGLAND)} fill="none" stroke="#0b1c27" strokeWidth="2" strokeLinejoin="round" />
      <g stroke="#0b1c27" strokeLinejoin="round">
        {ISLES.map(([fill, p]) => (
          <polygon key={p} points={points(p)} fill={fill} strokeWidth="2" />
        ))}
        {WATER.map((p) => (
          <polygon key={p} points={points(p)} fill="#f8f7fc" strokeWidth="1.5" />
        ))}
      </g>
    </svg>
  );
}

const LEGEND = [
  ['bg-[#35477a]', '15.4% to 16.5%'],
  ['bg-[#263558]', '16.5% to 17.6%'],
  ['bg-[#1a233c]', '17.6% to 18.8%'],
  ['bg-[#0c111c]', '18.8% to 19.9%'],
  ['bg-black', '19.9% to 21.0%'],
];

function SelectBox({ children, className }) {
  return (
    <div className="mt-[9px] flex h-[80px] items-center justify-between border-4 border-[#0b0c0c] bg-white pr-[11px] pl-[18px] text-black">
      <span className={`pt-[2px] ${className}`}>{children}</span>
      <svg viewBox="0 0 12 12" className="size-[12px]">
        <path d="M0 0h12L6 12z" fill="#000" />
      </svg>
    </div>
  );
}

function TextBox({ children, className }) {
  return (
    <div className={`mt-[9px] flex h-[80px] items-center border-4 border-[#0b0c0c] bg-white pt-px pl-[10px] text-black ${className}`}>
      {children}
    </div>
  );
}

function Preview() {
  return (
    <div className="mt-[9px] h-[1992px] border-l-[10px] border-[#b1b4b6] pt-[31px] pl-[236px]">
      <h3 className="ml-px font-bold tracking-[0.05px]">Example map</h3>
      <div className="mt-[40px] ml-[10px] flex gap-[45px]">
        <div className="w-[1261px]">
          <div className="-ml-[2px] tracking-[-0.65px]">1. Select data to view</div>
          <SelectBox className="tracking-[-0.35px]">Overall absence rate exact (Total, Total)</SelectBox>
          <div className="relative mt-[42px]">
            <ChoroplethMap />
            <div className="absolute top-[20px] left-[20px] w-[52px] rounded-[8px] bg-white shadow-[0_2px_10px_rgba(0,0,0,0.65)]">
              <div className="h-[53px] border-b-2 border-[#ccc] pl-[17px]">
                <svg viewBox="0 0 20 20" className="block h-[53px] w-[20px]">
                  <path d="M0 10h20M10 0v20" stroke="#000" strokeWidth="3.4" />
                </svg>
              </div>
              <div className="h-[53px] pl-[17px]">
                <svg viewBox="0 0 20 20" className="block h-[54px] w-[20px]">
                  <path d="M0 10h20" stroke="#000" strokeWidth="3.6" />
                </svg>
              </div>
            </div>
            <div className="absolute right-0 bottom-0 bg-white/70 px-[9px] text-[22px] leading-[33px] tracking-[-0.1px] text-[#0078a8]">Leaflet</div>
          </div>
        </div>
        <div className="w-[572px]">
          <div className="tracking-[-0.3px]">2. Select a location</div>
          <SelectBox className="tracking-[0.3px]">Select...</SelectBox>
          <div className="mt-[42px] pl-[6px] font-bold">
            <div>Key to Overall absence rate</div>
            <div className="tracking-[0.4px]">exact (Total, Total)</div>
          </div>
          <div className="mt-[40px] ml-[86px] tracking-[-0.25px]">
            {LEGEND.map(([swatch, label]) => (
              <div key={label} className="flex gap-[6px]">
                <span className={`h-[50px] w-[32px] ${swatch}`} />
                <span>{label}</span>
              </div>
            ))}
          </div>
        </div>
      </div>
    </div>
  );
}

export default function App() {
  return (
    <div className="relative h-[3274px] w-[2654px] overflow-hidden bg-white font-[Roboto,sans-serif] text-[38px] leading-[50px] whitespace-nowrap text-[#0b0c0c]">
      <div className="ml-[57px] h-full w-[2560px] border-x-2 border-[#b1b4b6] px-[40px]">
        <div className="h-full border-x-2 border-[#b1b4b6] px-[40px] pt-[34px]">
          <div className="flex h-[50px] text-[#1d70b8]">
            <svg viewBox="0 0 28 24" className="mt-[11px] h-[24px] w-[28px]">
              <path d="M0 0h28L14 24z" fill="#1d70b8" />
            </svg>
            <a className="ml-[22px] tracking-[-0.35px] underline decoration-3 underline-offset-4">Chart preview</a>
          </div>

          <Preview />

          <div className="mt-[50px] flex h-[112px]">
            <div className="mt-[10px] h-[90px] w-[159px] bg-[#f3f2f1] pt-[21px] pl-[40px]">
              <a className="tracking-[-0.25px] underline decoration-2 underline-offset-4">Data</a>
            </div>
            <div className="relative z-10 ml-[10px] w-[400px] border-x-2 border-t-2 border-[#b1b4b6] bg-white pt-[29px] pl-[38px] tracking-[-0.35px]">
              Chart configuration
            </div>
            <div className="mt-[10px] ml-[9px] h-[90px] w-[441px] bg-[#f3f2f1] pt-[21px] pl-[41px]">
              <a className="tracking-[-0.8px] underline decoration-2 underline-offset-4">GeoJSON (major axis)</a>
            </div>
          </div>

          <div className="-mt-[2px] h-[1060px] border-2 border-[#b1b4b6] pt-[62px] pl-[40px]">
            <h2 className="text-[48px] leading-[60px] font-bold tracking-[0.2px]">Chart configuration</h2>

            <div className="mt-[41px] tracking-[0.1px]">Chart title</div>
            <TextBox className="w-[1731px] tracking-[-0.8px]">Example map</TextBox>

            <div className="mt-[61px] tracking-[-0.1px]">Chart height (px)</div>
            <TextBox className="w-[205px] tracking-[2px]">800</TextBox>

            <div className="mt-[61px] tracking-[-0.15px]">Chart width (px)</div>
            <div className="mt-[10px] tracking-[-0.8px] text-[#6f777b]">Leave blank to set as full width</div>
            <div className="h-[10px]" />
            <TextBox className="w-[205px]" />

            <div className="mt-[61px] tracking-[-0.4px]">
              Using <em className="tracking-[0.1px]">Counties and Unitary Authorities December 2018 Boundaries EW BUC</em>
            </div>
            <button className="-mt-px block h-[76px] w-[353px] bg-[#00703c] pt-px text-center tracking-[-0.5px] text-white shadow-[0_4px_0_#002d18]">
              Save chart options
            </button>
          </div>
        </div>
      </div>

      <svg viewBox="0 0 74 684" className="absolute top-[403px] left-[236px] h-[684px] w-[74px]">
        <path d="M37 1L73.5 74H45V683H29V74H.5z" fill="#ff2600" />
      </svg>
      <div className="absolute top-[1112px] left-[157px] w-[232px] text-center font-['Liberation_Sans'] text-[81px] leading-[98px] text-[#ff2600]">
        <div>Chart</div>
        <div>height</div>
      </div>
      <svg viewBox="0 0 74 684" className="absolute top-[1334px] left-[236px] h-[684px] w-[74px]">
        <path d="M37 683L73.5 610H45V1H29V610H.5z" fill="#ff2600" />
      </svg>
      <svg viewBox="0 0 422 138" className="absolute top-[2124px] left-[299px] z-20 h-[138px] w-[422px]">
        <ellipse cx="211" cy="69" rx="203" ry="60" fill="none" stroke="#ff2600" strokeWidth="15" />
      </svg>
      <div className="absolute top-[2579px] left-[154px] h-[213px] w-[413px] border-[14px] border-[#ff2600]" />
    </div>
  );
}
